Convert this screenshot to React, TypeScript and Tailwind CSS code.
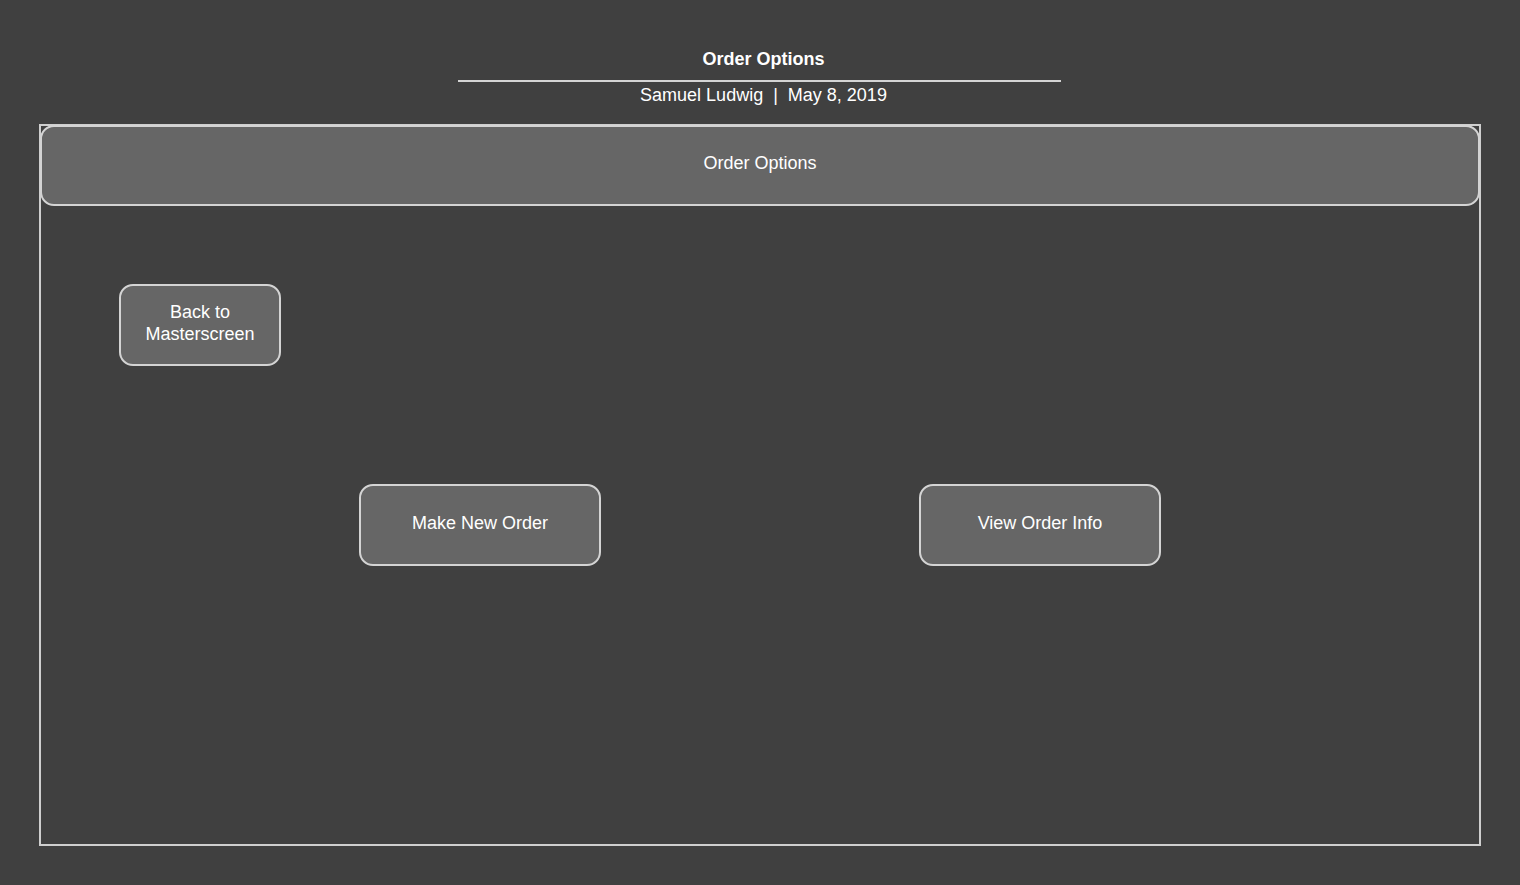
export default function App() {
  const font = { fontFamily: '"Liberation Sans", Arial, sans-serif' };
  return (
    <div className="w-full h-[885px] bg-[#404040] text-white overflow-hidden" style={font}>
      <div className="pt-[49px] ml-[458px] w-[611px] flex flex-col">
        <div className="text-center text-[18px] leading-[20px] font-bold">Order Options</div>
        <div className="mt-[11px] w-[603px] h-[2px] bg-[#d4d4d4]" />
        <div className="mt-[3px] text-center text-[18px] leading-[20px] whitespace-pre">Samuel Ludwig  |  May 8, 2019</div>
      </div>
      <div className="mt-[19px] ml-[39px] w-[1442px] h-[722px] border-2 border-[#cfcfcf] flex flex-col">
        <div className="-mt-[1px] -mx-[1px] h-[81px] pb-[5px] rounded-[14px] border-2 border-[#d4d4d4] bg-[#666666] flex items-center justify-center text-[18px]">
          Order Options
        </div>
        <div className="mt-[78px] ml-[78px] w-[162px] h-[82px] pb-[5px] rounded-[14px] border-2 border-[#d4d4d4] bg-[#666666] flex items-center justify-center text-center text-[18px] leading-[22px]">
          Back to<br />Masterscreen
        </div>
        <div className="mt-[118px] ml-[318px] flex gap-[318px]">
          <div className="w-[242px] h-[82px] pb-[3px] rounded-[14px] border-2 border-[#d4d4d4] bg-[#666666] flex items-center justify-center text-[18px]">
            Make New Order
          </div>
          <div className="w-[242px] h-[82px] pb-[3px] rounded-[14px] border-2 border-[#d4d4d4] bg-[#666666] flex items-center justify-center text-[18px]">
            View Order Info
          </div>
        </div>
      </div>
    </div>
  );
}
